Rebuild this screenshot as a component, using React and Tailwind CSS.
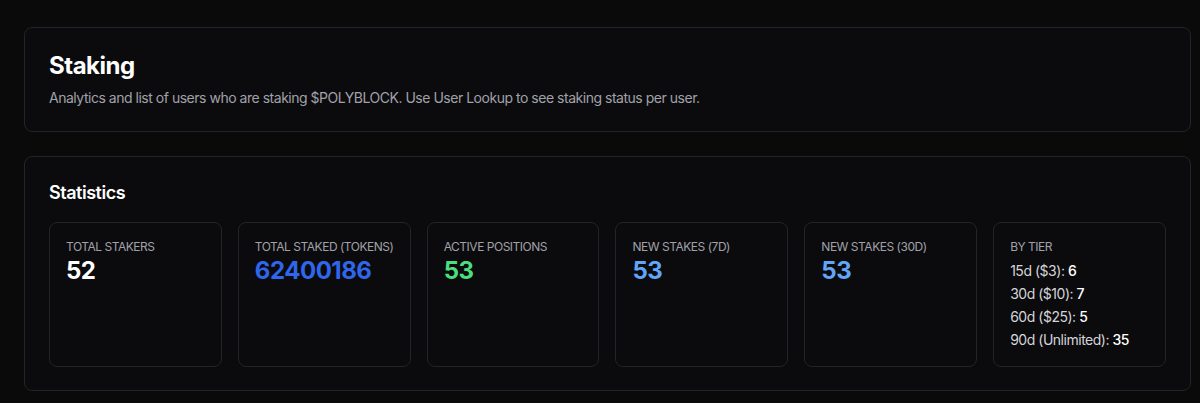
import React from "react";

const stats = [
  { label: "Total Stakers", value: "52", color: "text-white" },
  { label: "Total Staked (Tokens)", value: "62400186", color: "text-[#2f66eb]" },
  { label: "Active Positions", value: "53", color: "text-[#4ade80]" },
  { label: "New Stakes (7D)", value: "53", color: "text-[#60a5fa]" },
  { label: "New Stakes (30D)", value: "53", color: "text-[#60a5fa]" },
];

const tiers = [
  { name: "15d ($3)", count: 6 },
  { name: "30d ($10)", count: 7 },
  { name: "60d ($25)", count: 5 },
  { name: "90d (Unlimited)", count: 35 },
];

const StatCard = ({ label, children }) => {
  return (
    <div className="rounded-lg border border-[#232328] bg-[#0b0b0d] p-4">
      <div className="whitespace-nowrap text-xs leading-4 uppercase text-[#a1a1aa]">{label}</div>
      {children}
    </div>
  );
};

export default function App() {
  return (
    <div
      className="min-h-screen bg-[#0a0a0b] pl-6 pr-[9px] pt-[27px] pb-6 tracking-[-0.03em] text-white"
      style={{ fontFamily: "Inter, 'Noto Sans', sans-serif" }}
    >
      <div className="rounded-lg border border-[#232328] bg-[#0b0b0d] px-6 pt-[22px] pb-[23px]">
        <h1 className="text-2xl leading-8 font-bold">Staking</h1>
        <p className="mt-[6px] text-sm leading-5 text-[#a1a1aa]">
          Analytics and list of users who are staking $POLYBLOCK. Use User Lookup to see staking status per user.
        </p>
      </div>

      <div className="mt-6 rounded-lg border border-[#232328] bg-[#0b0b0d] px-6 pt-6 pb-[23px]">
        <h2 className="text-lg leading-6 font-semibold">Statistics</h2>
        <div className="mt-[17px] grid grid-cols-6 gap-4">
          {stats.map((s) => (
            <StatCard key={s.label} label={s.label}>
              <div className={`text-2xl leading-8 font-bold ${s.color}`}>{s.value}</div>
            </StatCard>
          ))}
          <StatCard label="By Tier">
            <div className="mt-[6px] flex flex-col gap-[3px] text-sm leading-5 text-[#d4d4d8]">
              {tiers.map((t) => (
                <div key={t.name}>
                  {t.name}: <span className="font-medium text-white">{t.count}</span>
                </div>
              ))}
            </div>
          </StatCard>
        </div>
      </div>
    </div>
  );
}
